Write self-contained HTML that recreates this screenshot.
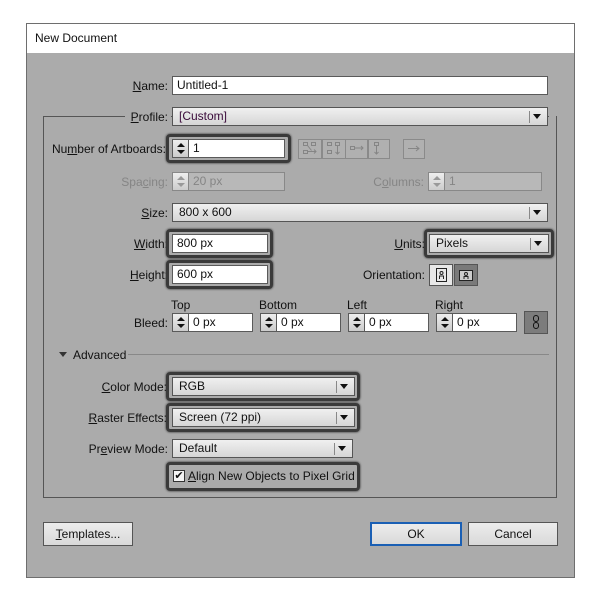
<!DOCTYPE html>
<html><head><meta charset="utf-8"><style>
*{box-sizing:border-box;margin:0;padding:0}
body{width:600px;height:600px;background:#fff;position:relative;font-family:"Liberation Sans",sans-serif;font-size:12px;color:#111;overflow:hidden}
.a{position:absolute}
.win{left:26px;top:23px;width:549px;height:555px;border:1px solid #6e6e6e;background:#ababab}
.tb{left:27px;top:24px;width:547px;height:29px;background:#fff}
.lbl{position:absolute;text-align:right;line-height:14px;white-space:nowrap}
.dis{color:#858585}
.in{position:absolute;background:#fff;border:1px solid #5a5a5a;height:19px;line-height:17px;padding-left:4px}
.dd{position:absolute;border:1px solid #555;height:19px;line-height:17px;padding-left:6px;background:linear-gradient(#f0f0f0,#d6d6d6)}
.dd:after{content:"";position:absolute;right:6px;top:6px;border-left:4px solid transparent;border-right:4px solid transparent;border-top:5px solid #111}
.dd:before{content:"";position:absolute;right:17px;top:3px;width:1px;height:12px;background:#888}
.ring{position:absolute;border:3px solid #3a3a3a;border-radius:4px;box-shadow:0 0 2px #222}
.sp{position:absolute;background:linear-gradient(#eee,#ccc);border:1px solid #5a5a5a;width:17px;height:19px}
.sp:before{content:"";position:absolute;left:4px;top:3px;border-left:4px solid transparent;border-right:4px solid transparent;border-bottom:4px solid #111}
.sp:after{content:"";position:absolute;left:4px;top:10px;border-left:4px solid transparent;border-right:4px solid transparent;border-top:4px solid #111}
.sp.d:before{border-bottom-color:#999}.sp.d:after{border-top-color:#999}
.btn{position:absolute;border:1px solid #555;background:linear-gradient(#ececec,#d9d9d9);text-align:center;line-height:22px;height:24px}
u{text-decoration:underline}
.ic{position:absolute;border:1px solid #8a8a8a;height:20px;background:#b0b0b0}
</style></head><body>
<div class="a win"></div>
<div class="a tb"></div>
<div class="lbl" style="left:35px;top:31px">New Document</div>

<div class="lbl" style="right:432px;top:79px"><u>N</u>ame:</div>
<div class="in" style="left:172px;top:76px;width:376px">Untitled-1</div>

<div class="a" style="left:43px;top:116px;width:514px;height:382px;border:1px solid #555"></div>
<div class="a" style="left:125px;top:110px;width:46px;height:12px;background:#ababab"></div>
<div class="a" style="left:549px;top:110px;width:7px;height:12px;background:#ababab"></div>
<div class="lbl" style="right:432px;top:110px"><u>P</u>rofile:</div>
<div class="dd" style="left:172px;top:107px;width:376px;color:#3a0a3a">[Custom]</div>

<div class="lbl" style="right:434px;top:142px">Nu<u>m</u>ber of Artboards:</div>
<div class="ring" style="left:166px;top:134px;width:125px;height:29px"></div>
<div class="sp" style="left:172px;top:139px"></div>
<div class="in" style="left:188px;top:139px;width:97px">1</div>
<div class="ic" style="left:298px;top:139px;width:24px"></div>
<div class="ic" style="left:322px;top:139px;width:24px"></div>
<div class="ic" style="left:345px;top:139px;width:23px"></div>
<div class="ic" style="left:368px;top:139px;width:22px"></div>
<div class="ic" style="left:403px;top:139px;width:22px"></div>
<svg class="a" style="left:298px;top:139px" width="128" height="20" fill="none" stroke="#858585" stroke-width="1">
<rect x="5.5" y="3.5" width="4" height="3"/><rect x="13.5" y="3.5" width="4" height="3"/><rect x="5.5" y="11.5" width="4" height="3"/><path d="M10 12.5h8M16 10.5l2 2-2 2M9.5 6.5l4 5"/>
<rect x="29.5" y="3.5" width="4" height="3"/><rect x="37.5" y="3.5" width="4" height="3"/><rect x="29.5" y="11.5" width="4" height="3"/><path d="M39.5 7v8M37.5 13l2 2 2-2"/>
<rect x="52.5" y="7.5" width="4" height="3"/><path d="M57 9h8M63 7l2 2-2 2"/>
<rect x="76.5" y="3.5" width="4" height="3"/><path d="M78.5 7v8M76.5 13l2 2 2-2"/>
<path d="M110 9.5h11M118 7l3 2.5-3 2.5"/>
</svg>

<div class="lbl dis" style="right:432px;top:175px">Spa<u>c</u>ing:</div>
<div class="sp d" style="left:172px;top:172px;border-color:#888"></div>
<div class="in dis" style="left:188px;top:172px;width:97px;background:#b8b8b8;border-color:#888">20 px</div>
<div class="lbl dis" style="right:176px;top:175px">C<u>o</u>lumns:</div>
<div class="sp d" style="left:428px;top:172px;border-color:#888"></div>
<div class="in dis" style="left:444px;top:172px;width:98px;background:#b8b8b8;border-color:#888">1</div>

<div class="lbl" style="right:432px;top:206px"><u>S</u>ize:</div>
<div class="dd" style="left:172px;top:203px;width:376px">800 x 600</div>

<div class="lbl" style="right:432px;top:237px"><u>W</u>idth:</div>
<div class="ring" style="left:166px;top:229px;width:107px;height:29px"></div>
<div class="in" style="left:172px;top:234px;width:96px">800 px</div>
<div class="lbl" style="right:175px;top:237px"><u>U</u>nits:</div>
<div class="ring" style="left:424px;top:229px;width:130px;height:29px"></div>
<div class="dd" style="left:429px;top:234px;width:120px">Pixels</div>

<div class="lbl" style="right:432px;top:268px"><u>H</u>eight:</div>
<div class="ring" style="left:166px;top:260px;width:107px;height:29px"></div>
<div class="in" style="left:172px;top:265px;width:96px">600 px</div>
<div class="lbl" style="right:175px;top:268px">Orientation:</div>
<div class="a" style="left:429px;top:264px;width:24px;height:22px;border:1px solid #555;background:#e8e8e8"></div>
<svg class="a" style="left:429px;top:264px" width="50" height="22" fill="none" stroke="#222">
<rect x="7.5" y="4.5" width="10" height="13" fill="#e8e8e8"/><circle cx="12.5" cy="9" r="1.5"/><path d="M10.5 15v-3h4v3"/>
</svg>
<div class="a" style="left:454px;top:264px;width:24px;height:22px;border:1px solid #555;background:#7a7a7a"></div>
<svg class="a" style="left:454px;top:264px" width="24" height="22" fill="none" stroke="#222">
<rect x="5.5" y="6.5" width="13" height="10" fill="#ccc"/><circle cx="12" cy="10" r="1.5"/><path d="M10 15v-2.5h4V15"/>
</svg>

<div class="lbl" style="left:171px;top:298px">Top</div>
<div class="lbl" style="left:259px;top:298px">Bottom</div>
<div class="lbl" style="left:347px;top:298px">Left</div>
<div class="lbl" style="left:435px;top:298px">Right</div>
<div class="lbl" style="right:432px;top:316px">Bleed:</div>
<div class="sp" style="left:172px;top:313px"></div><div class="in" style="left:188px;top:313px;width:65px">0 px</div>
<div class="sp" style="left:260px;top:313px"></div><div class="in" style="left:276px;top:313px;width:65px">0 px</div>
<div class="sp" style="left:348px;top:313px"></div><div class="in" style="left:364px;top:313px;width:65px">0 px</div>
<div class="sp" style="left:436px;top:313px"></div><div class="in" style="left:452px;top:313px;width:65px">0 px</div>
<div class="a" style="left:524px;top:311px;width:24px;height:23px;border:1px solid #555;background:#7c7c7c"></div>
<div class="a" style="left:533px;top:315px;width:6px;height:7px;border:1.5px solid #111;border-radius:3px"></div>
<div class="a" style="left:533px;top:322px;width:6px;height:7px;border:1.5px solid #111;border-radius:3px"></div>

<div class="a" style="left:59px;top:352px;border-left:4px solid transparent;border-right:4px solid transparent;border-top:5px solid #333"></div>
<div class="lbl" style="left:73px;top:348px">Advanced</div>
<div class="a" style="left:128px;top:354px;width:421px;height:1px;background:#888"></div>

<div class="lbl" style="right:433px;top:380px"><u>C</u>olor Mode:</div>
<div class="ring" style="left:166px;top:372px;width:194px;height:29px"></div>
<div class="dd" style="left:172px;top:377px;width:183px">RGB</div>

<div class="lbl" style="right:433px;top:411px"><u>R</u>aster Effects:</div>
<div class="ring" style="left:166px;top:403px;width:194px;height:29px"></div>
<div class="dd" style="left:172px;top:408px;width:183px">Screen (72 ppi)</div>

<div class="lbl" style="right:432px;top:442px">Pr<u>e</u>view Mode:</div>
<div class="dd" style="left:172px;top:439px;width:181px">Default</div>

<div class="ring" style="left:166px;top:462px;width:194px;height:29px"></div>
<div class="a" style="left:173px;top:470px;width:12px;height:12px;border:1px solid #333;background:#f4f4f4;font-size:11px;line-height:10px;text-align:center">✔</div>
<div class="lbl" style="left:188px;top:469px"><u>A</u>lign New Objects to Pixel Grid</div>

<div class="btn" style="left:43px;top:522px;width:90px"><u>T</u>emplates...</div>
<div class="btn" style="left:370px;top:522px;width:92px;border:2px solid #1a5fb4;line-height:20px">OK</div>
<div class="btn" style="left:468px;top:522px;width:90px">Cancel</div>
</body></html>
